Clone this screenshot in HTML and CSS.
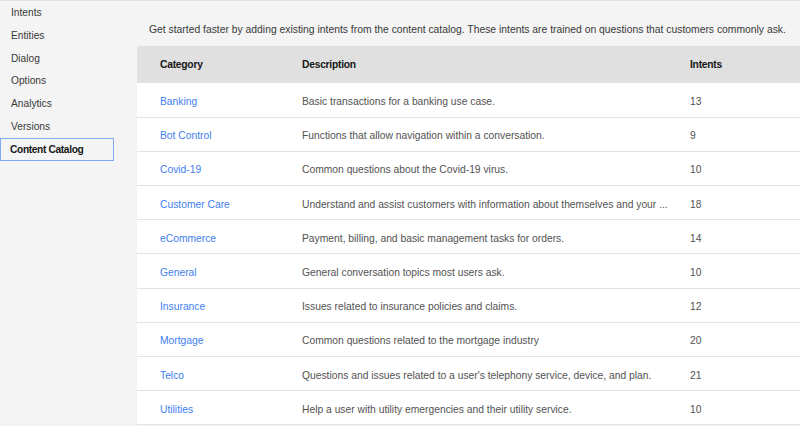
FILE: index.html
```html
<!DOCTYPE html>
<html lang="en">
<head>
<meta charset="utf-8">
<title>Content Catalog</title>
<link rel="stylesheet" href="styles.css">
</head>
<body>
<div class="app">
  <nav class="sidebar">
    <a class="nav-item">Intents</a>
    <a class="nav-item">Entities</a>
    <a class="nav-item">Dialog</a>
    <a class="nav-item">Options</a>
    <a class="nav-item">Analytics</a>
    <a class="nav-item">Versions</a>
    <a class="nav-item active">Content Catalog</a>
  </nav>
  <main class="main">
    <p class="intro">Get started faster by adding existing intents from the content catalog. These intents are trained on questions that customers commonly ask.</p>
    <table class="catalog">
      <colgroup>
        <col class="c-cat">
        <col class="c-desc">
        <col class="c-num">
      </colgroup>
      <thead>
        <tr><th>Category</th><th>Description</th><th>Intents</th></tr>
      </thead>
      <tbody>
        <tr><td><a class="link">Banking</a></td><td class="desc">Basic transactions for a banking use case.</td><td>13</td></tr>
        <tr><td><a class="link">Bot Control</a></td><td class="desc">Functions that allow navigation within a conversation.</td><td>9</td></tr>
        <tr><td><a class="link">Covid-19</a></td><td class="desc">Common questions about the Covid-19 virus.</td><td>10</td></tr>
        <tr><td><a class="link">Customer Care</a></td><td class="desc">Understand and assist customers with information about themselves and your ...</td><td>18</td></tr>
        <tr><td><a class="link">eCommerce</a></td><td class="desc">Payment, billing, and basic management tasks for orders.</td><td>14</td></tr>
        <tr><td><a class="link">General</a></td><td class="desc">General conversation topics most users ask.</td><td>10</td></tr>
        <tr><td><a class="link">Insurance</a></td><td class="desc">Issues related to insurance policies and claims.</td><td>12</td></tr>
        <tr><td><a class="link">Mortgage</a></td><td class="desc">Common questions related to the mortgage industry</td><td>20</td></tr>
        <tr><td><a class="link">Telco</a></td><td class="desc">Questions and issues related to a user's telephony service, device, and plan.</td><td>21</td></tr>
        <tr><td><a class="link">Utilities</a></td><td class="desc">Help a user with utility emergencies and their utility service.</td><td>10</td></tr>
      </tbody>
    </table>
  </main>
</div>
</body>
</html>
```
FILE: styles.css
```css
* { box-sizing: border-box; }
html, body {
  margin: 0;
  padding: 0;
  background: #f4f4f4;
}
body {
  font-family: "Liberation Sans", Arial, sans-serif;
  font-size: 10.3px;
  color: #393939;
  overflow: hidden;
}
.app {
  display: flex;
  height: 426px;
  border-top: 1px solid #e2e2e2;
}
.sidebar {
  width: 137px;
  flex: none;
  display: flex;
  flex-direction: column;
  padding-top: 1px;
}
.nav-item {
  display: block;
  height: 22.8px;
  line-height: 22.8px;
  padding-left: 11px;
  color: #393939;
  font-size: 10.2px;
}
.nav-item.active {
  width: 114px;
  height: 23px;
  line-height: 21px;
  margin-top: -1px;
  padding-left: 9px;
  border: 1px solid #7fa9f5;
  font-weight: bold;
  color: #161616;
  letter-spacing: -0.35px;
}
.main {
  flex: 1;
  min-width: 0;
  display: flex;
  flex-direction: column;
}
.intro {
  margin: 0;
  padding: 23px 0 0 12px;
  height: 45px;
  font-size: 10.35px;
  color: #393939;
  white-space: nowrap;
}
.catalog {
  width: 100%;
  table-layout: fixed;
  border-collapse: collapse;
  background: #fff;
}
.c-cat { width: 148px; }
.c-num { width: 126px; }
.catalog th {
  background: #e0e0e0;
  height: 37px;
  text-align: left;
  font-weight: bold;
  color: #161616;
  letter-spacing: -0.25px;
  padding: 0 0 0 23px;
}
.catalog th:nth-child(2),
.catalog td:nth-child(2) { padding-left: 17px; }
.catalog th:nth-child(3),
.catalog td:nth-child(3) { padding-left: 16px; }
.catalog td {
  height: 34.2px;
  padding: 3px 0 0 23px;
  border-bottom: 1px solid #e3e3e3;
  color: #525252;
  white-space: nowrap;
  overflow: hidden;
  text-overflow: ellipsis;
}
.catalog td.desc { padding-right: 2px; }
.link {
  color: #3f80f0;
  text-decoration: none;
}
```
